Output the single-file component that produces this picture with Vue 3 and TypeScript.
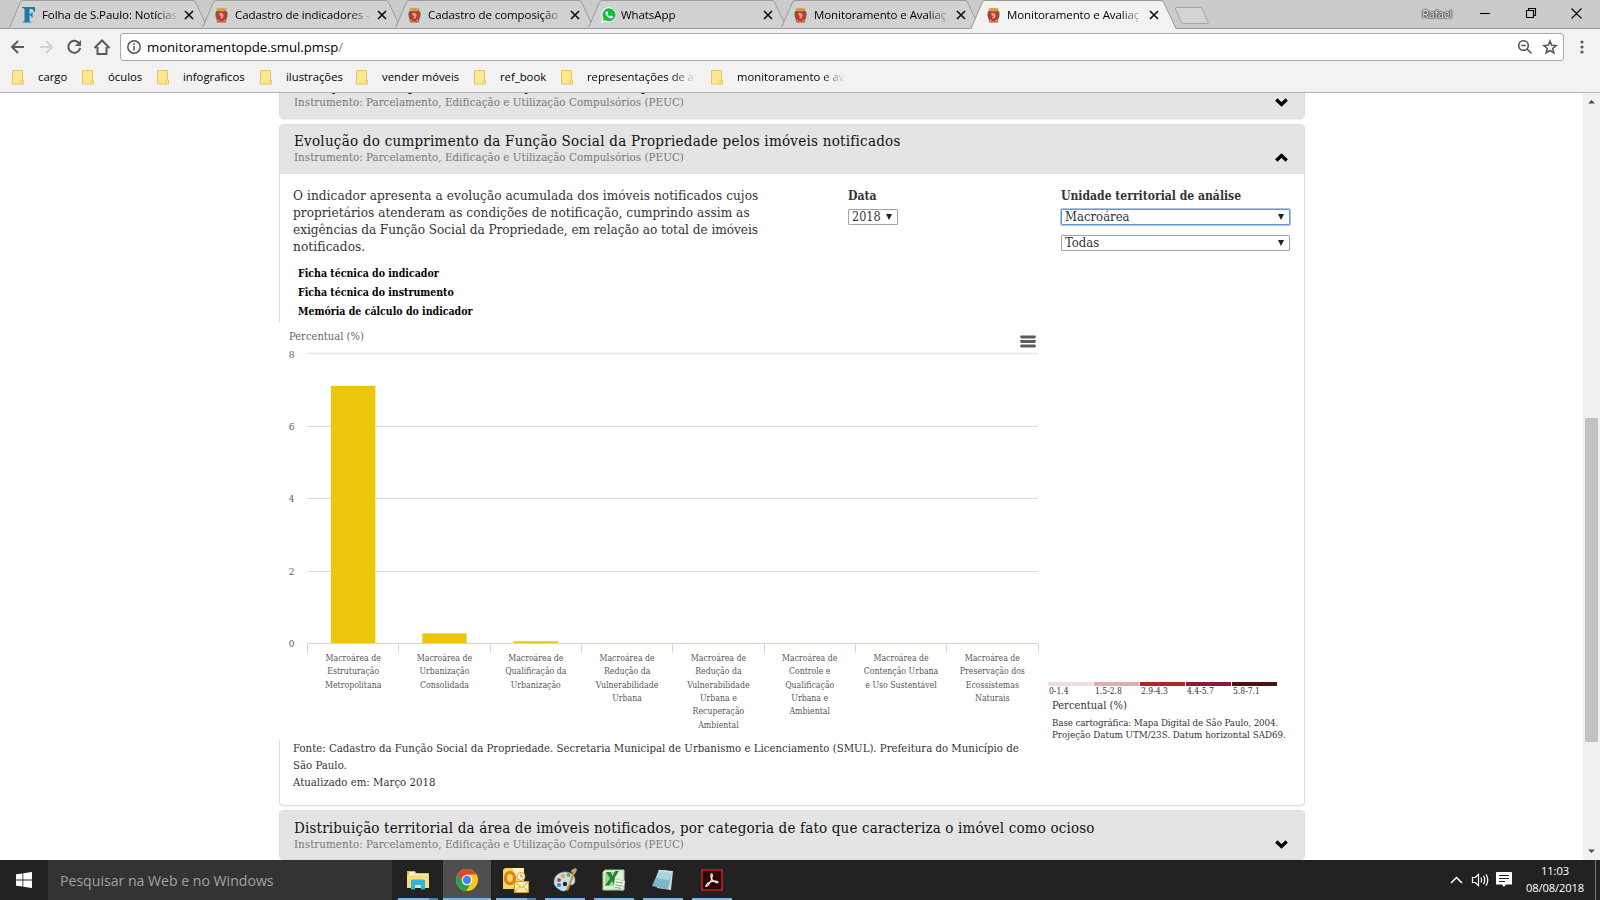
<script setup lang="ts">
interface Tab { title: string; icon: 'folha' | 'crest' | 'whatsapp'; active?: boolean }

const tabs: Tab[] = [
  { title: 'Folha de S.Paulo: Notícias', icon: 'folha' },
  { title: 'Cadastro de indicadores - ', icon: 'crest' },
  { title: 'Cadastro de composição', icon: 'crest' },
  { title: 'WhatsApp', icon: 'whatsapp' },
  { title: 'Monitoramento e Avaliaç', icon: 'crest' },
  { title: 'Monitoramento e Avaliaç', icon: 'crest', active: true },
]

const bookmarks: { label: string; cls: string }[] = [
  { label: 'cargo', cls: 'w70' },
  { label: 'óculos', cls: 'w75' },
  { label: 'infograficos', cls: 'w103' },
  { label: 'ilustrações', cls: 'w96' },
  { label: 'vender móveis', cls: 'w118' },
  { label: 'ref_book', cls: 'w87' },
  { label: 'representações de ar', cls: 'w150 clip' },
  { label: 'monitoramento e ava', cls: 'w150 clip' },
]

const instrument = 'Instrumento: Parcelamento, Edificação e Utilização Compulsórios (PEUC)'

const links = ['Ficha técnica do indicador', 'Ficha técnica do instrumento', 'Memória de cálculo do indicador']

const categories: { lines: string[]; value: number }[] = [
  { lines: ['Macroárea de', 'Estruturação', 'Metropolitana'], value: 7.12 },
  { lines: ['Macroárea de', 'Urbanização', 'Consolidada'], value: 0.28 },
  { lines: ['Macroárea de', 'Qualificação da', 'Urbanização'], value: 0.06 },
  { lines: ['Macroárea de', 'Redução da', 'Vulnerabilidade', 'Urbana'], value: 0 },
  { lines: ['Macroárea de', 'Redução da', 'Vulnerabilidade', 'Urbana e', 'Recuperação', 'Ambiental'], value: 0 },
  { lines: ['Macroárea de', 'Controle e', 'Qualificação', 'Urbana e', 'Ambiental'], value: 0 },
  { lines: ['Macroárea de', 'Contenção Urbana', 'e Uso Sustentável'], value: 0 },
  { lines: ['Macroárea de', 'Preservação dos', 'Ecossistemas', 'Naturais'], value: 0 },
]

/* Plot geometry, in the chart's own coordinates */
const left = 28.5
const right = 759
const zeroY = 321.5
const unit = 36.2
const step = (right - left) / categories.length
const ticks = [0, 2, 4, 6, 8]
const gridY = (v: number): number => Math.floor(zeroY - v * unit) + 0.5
const centerX = (i: number): number => left + step * (i + 0.5)

const legend = [
  { range: '0-1.4', cls: 'c1' },
  { range: '1.5-2.8', cls: 'c2' },
  { range: '2.9-4.3', cls: 'c3' },
  { range: '4.4-5.7', cls: 'c4' },
  { range: '5.8-7.1', cls: 'c5' },
]
</script>

<template>
  <div class="screen">
    <header class="tabstrip">
      <div v-for="(t, i) in tabs" :key="i" class="tab" :class="{ active: t.active }">
        <svg class="shape" width="206" height="29" viewBox="0 0 206 29">
          <path d="M0 29L11 3Q12 .5 14 .5H190Q192 .5 193 3L205 28.5V29Z" class="fill" />
          <path d="M0 28.5L11 3Q12 .5 14 .5H190Q192 .5 193 3L205 28.5" class="edge" />
        </svg>
        <span class="fav">
          <svg v-if="t.icon === 'folha'" width="14" height="18" viewBox="0 0 14 18">
            <path d="M0 1h13v5h-1.200c-.3-2-1-3-2.600-3H7.500v5.200c1.400 0 2-.6 2.200-2h.9v5.400h-.9c-.2-1.400-.8-2-2.200-2v4.600c0 1.200.5 1.500 1.900 1.600v.8H.8v-.8c1.300-.1 1.700-.4 1.700-1.600V4c0-1.300-.5-1.700-2.500-1.900z" fill="#1a7ba6" />
          </svg>
          <svg v-else-if="t.icon === 'crest'" width="13" height="16" viewBox="0 0 13 16">
            <path d="M1.500.8l1.700 1L5 .6l1.500 1L8 .6l1.800 1.200 1.700-1-.6 3.500H2.100z" fill="#c9a13c" />
            <path d="M1.200 4h2.300v9H2Q-.8 8 1.200 4zM11.800 4H9.500v9H11Q13.800 8 11.800 4z" fill="#5c6f45" />
            <path d="M2.300 4.200h8.400v6q0 3-4.200 4.300Q2.300 13 2.300 10.200z" fill="#cf2f2d" />
            <path d="M4.500 6h2.500l1.800 2-1.200 3.500H5.200L6 9 4.300 8z" fill="#e8a597" />
            <path d="M1.500 12.700q5 3 10 0l-.8 2.800H2.300z" fill="#b75a42" />
          </svg>
          <svg v-else width="16" height="16" viewBox="0 0 16 16">
            <path d="M8.200.3a7.500 7.500 0 1 1-3.800 14.200L.3 15.700l1.200-4A7.500 7.500 0 0 1 8.200.3z" fill="#f7fff8" />
            <path d="M8.200 1.300a6.500 6.500 0 1 1-3.600 12l-2.800.8.800-2.700A6.500 6.500 0 0 1 8.200 1.300z" fill="#12bd3f" />
            <path d="M5.300 4.300l1-.1.900 2-.7 1c.6 1.200 1.400 1.900 2.600 2.400l.9-1 2 .9c.2 1.300-.9 2-2 2-2.500-.2-5.300-3-5.500-5.200 0-.9.300-1.500.8-2z" fill="#fff" />
          </svg>
        </span>
        <span class="title">{{ t.title }}</span>
        <svg class="close" width="10" height="10" viewBox="0 0 10 10"><path d="M1 1l8 8M9 1L1 9" /></svg>
      </div>
      <svg class="newtab" width="36" height="18" viewBox="0 0 36 18">
        <path d="M2.500.5H26q1.500 0 2.200 1.300L34 15q.6 1.500-1 1.500H9.500q-1.500 0-2.200-1.500L1.500 2Q1 .5 2.500.5z" fill="#d4d4d4" stroke="#a5a5a5" />
      </svg>
      <div class="window">
        <span class="user">Rafael</span>
        <svg width="104" height="13" viewBox="0 0 104 13" fill="none" stroke="#000" stroke-width="1.100">
          <path d="M1 6.500h10" /><path d="M47.500 3.500h7v7h-7zM49.500 3.500v-2h7v7h-2M92.500 1.500l10 10M102.500 1.500l-10 10" />
        </svg>
      </div>
    </header>

    <div class="toolbar">
      <svg width="104" height="20" viewBox="0 0 104 20" fill="none" stroke-width="2">
        <g stroke="#5a5a5a">
          <path d="M14 10H2M8 4l-6 6 6 6" />
          <path d="M69.300 6.500A6 6 0 1 0 70.200 11" /><path d="M71 3v6h-6z" fill="#5a5a5a" stroke="none" />
          <path d="M84.500 11l7.500-7.500 7.500 7.500M87.500 10v7h9v-7" />
        </g>
        <path d="M30 10h12M36 4l6 6-6 6" stroke="#d2d2d2" />
      </svg>
      <div class="omnibox">
        <svg width="14" height="14" viewBox="0 0 14 14" fill="none" stroke="#555" stroke-width="1.500">
          <circle cx="7" cy="7" r="6.200" /><path d="M7 6v4.500M7 3.300v1.600" />
        </svg>
        <span class="url">monitoramentopde.smul.pmsp<i>/</i></span>
        <svg width="42" height="16" viewBox="0 0 42 16" fill="none" stroke="#555" stroke-width="1.600">
          <circle cx="6.500" cy="6.500" r="4.800" /><path d="M10 10l4.500 4.500M4.300 6.500h4.400" />
          <path d="M33 2l1.700 4.200 4.500.3-3.500 2.900 1.200 4.500L33 11.500l-3.900 2.400 1.200-4.500-3.500-2.900 4.500-.3z" stroke-width="1.500" />
        </svg>
      </div>
      <svg class="menu" width="4" height="14" viewBox="0 0 4 14" fill="#5a5a5a"><circle cx="2" cy="2" r="1.600" /><circle cx="2" cy="7" r="1.600" /><circle cx="2" cy="12" r="1.600" /></svg>
    </div>

    <nav class="bookmarks">
      <div v-for="b in bookmarks" :key="b.label" class="bm" :class="b.cls">
        <svg width="12" height="15" viewBox="0 0 12 15"><path d="M.5.500h10v9.500h1v4H.5z" fill="#ffe793" stroke="#e6c460" /><path d="M9 14v-3.500l1.500-.5" fill="none" stroke="#e6c460" /></svg>
        <span>{{ b.label }}</span>
      </div>
    </nav>

    <div class="viewport">
      <main class="page">
        <section class="panel">
          <div class="head">
            <div><h2>Situação do cumprimento da Função Social da Propriedade</h2><p>{{ instrument }}</p></div>
            <svg class="chev" width="13" height="9" viewBox="0 0 13 9"><path d="M1.300 1.500l5.200 5 5.200-5" /></svg>
          </div>
        </section>

        <section class="panel open">
          <div class="head">
            <div><h2 class="t1">Evolução do cumprimento da Função Social da Propriedade pelos imóveis notificados</h2><p>{{ instrument }}</p></div>
            <svg class="chev" width="13" height="9" viewBox="0 0 13 9"><path d="M1.300 7.500l5.200-5 5.200 5" /></svg>
          </div>
          <div class="info">
            <div>
              <p class="desc">O indicador apresenta a evolução acumulada dos imóveis notificados cujos<br><span class="d2">proprietários atenderam as condições de notificação, cumprindo assim as</span><br><span class="d3">exigências da Função Social da Propriedade, em relação ao total de imóveis</span><br>notificados.</p>
              <ul><li v-for="l in links" :key="l">{{ l }}</li></ul>
            </div>
            <div class="field date"><label>Data</label><div class="select">2018<b></b></div></div>
            <div class="field"><label>Unidade territorial de análise</label><div class="select focus">Macroárea<b></b></div><div class="select">Todas<b></b></div></div>
          </div>

          <div class="row">
            <svg class="chart" width="764" height="418" viewBox="0 0 764 418">
              <text x="10" y="18" class="axis">Percentual (%)</text>
              <g v-for="t in ticks" :key="t">
                <path v-if="t > 0" :d="`M${left} ${gridY(t)}H${right}`" :class="['grid', { top: t === 8 }]" />
                <text x="12.500" :y="gridY(t) + 3" class="tick" :class="{ drop: t === 8 }">{{ t }}</text>
              </g>
              <rect v-for="(c, i) in categories" :key="'b' + i" :x="centerX(i) - 22.200" :y="zeroY - c.value * unit" width="44.400" :height="c.value * unit" fill="#ecc60b" />
              <path :d="`M${left} ${zeroY}H${right}`" class="base" />
              <path v-for="i in 9" :key="'t' + i" :d="`M${Math.floor(left + step * (i - 1)) + .5} ${zeroY}v9`" class="base" />
              <g v-for="(c, i) in categories" :key="'c' + i">
                <text v-for="(l, j) in c.lines" :key="j" :x="centerX(i)" :y="338.800 + j * 13.400" class="cat">{{ l }}</text>
              </g>
              <path d="M742.500 15h13M742.500 19.500h13M742.500 24h13" stroke="#5c5c5c" stroke-width="2.800" stroke-linecap="round" />
            </svg>
            <aside class="map">
              <div class="legend"><div v-for="l in legend" :key="l.range"><i :class="l.cls"></i><span>{{ l.range }}</span></div></div>
              <p class="unit">Percentual (%)</p>
              <p class="note"><span>Base cartográfica: Mapa Digital de São Paulo, 2004.</span><br>Projeção Datum UTM/23S. Datum horizontal SAD69.</p>
            </aside>
          </div>

          <p class="source">Fonte: Cadastro da Função Social da Propriedade. Secretaria Municipal de Urbanismo e Licenciamento (SMUL). Prefeitura do Município de<br>São Paulo.<br>Atualizado em: Março 2018</p>
        </section>

        <section class="panel last">
          <div class="head">
            <div><h2 class="t2">Distribuição territorial da área de imóveis notificados, por categoria de fato que caracteriza o imóvel como ocioso</h2><p>{{ instrument }}</p></div>
            <svg class="chev" width="13" height="9" viewBox="0 0 13 9"><path d="M1.300 1.500l5.200 5 5.200-5" /></svg>
          </div>
        </section>
      </main>
      <div class="scroll">
        <svg width="17" height="17" viewBox="0 0 17 17"><path d="M5 10.500h7L8.500 7z" fill="#505050" /></svg>
        <div class="thumb"></div>
        <svg width="17" height="17" viewBox="0 0 17 17"><path d="M5 6.500h7L8.500 10z" fill="#505050" /></svg>
      </div>
    </div>

    <footer class="taskbar">
      <div class="start"><svg width="16" height="16" viewBox="0 0 16 16" fill="#fff"><path d="M0 2.300l6.500-.9v6.200H0zM7.300 1.300L16 0v7.600H7.300zM0 8.400h6.500v6.200L0 13.700zM7.300 8.400H16V16l-8.700-1.300z" /></svg></div>
      <div class="search">Pesquisar na Web e no Windows</div>
      <div class="apps">
        <div class="app double">
          <svg width="24" height="24" viewBox="0 0 24 24"><path d="M1 3h8l1.500 2H23v15H1z" fill="#e9b949" /><path d="M3 4h5l1 2h13v3H3z" fill="#fff3c2" /><path d="M1 7h22v13H1z" fill="#fbdc7a" /><path d="M5 13q0-1.500 1.500-1.500h11Q19 11.500 19 13v8.500h-4V17H9v4.500H5z" fill="#2db4dc" /></svg>
        </div>
        <div class="app current">
          <svg width="24" height="24" viewBox="0 0 24 24"><circle cx="12" cy="12" r="11" fill="#fbc916" /><path d="M12 12L2.500 6.500A11 11 0 0 0 11 23l5.500-9z" fill="#2b9f49" /><path d="M2.500 6.500A11 11 0 0 1 21.500 6.500H12L8 14z" fill="#df4432" /><circle cx="12" cy="12" r="5.300" fill="#fff" /><circle cx="12" cy="12" r="4.200" fill="#4b83e8" /></svg>
        </div>
        <div class="app double">
          <svg width="28" height="28" viewBox="0 0 28 28"><path d="M3 2h19v21H1V4z" fill="#f6d465" /><path d="M11 2h11v9L11 14z" fill="#fff2bd" /><ellipse cx="8" cy="12" rx="4.600" ry="5.600" fill="none" stroke="#df8414" stroke-width="3.200" /><circle cx="19" cy="10.500" r="4" fill="#fff7d9" stroke="#e3a33c" /><path d="M19 8v3h2" fill="none" stroke="#c67a21" /><path d="M12.500 15.500h14v11h-14z" fill="#fff0ae" stroke="#cf9d36" /><path d="M12.500 15.500l7 6.500 7-6.500M12.500 26.500l5-6M26.500 26.500l-5-6" fill="none" stroke="#cf9d36" /></svg>
        </div>
        <div class="app">
          <svg width="24" height="26" viewBox="0 0 24 26"><path d="M1 15C1 9 6 5 12 5s10 3 10 8-3 5-5 5-2 2-3 4-4 3-7 1-6-4-6-8z" fill="#c5dfef" stroke="#6e9dbd" stroke-width=".6" /><circle cx="6" cy="13" r="2" fill="#ce3a3a" /><circle cx="10" cy="9" r="2" fill="#e8a12a" /><circle cx="15.500" cy="8" r="2" fill="#67ad3b" /><circle cx="6" cy="18" r="2" fill="#3e7fd0" /><circle cx="12" cy="17" r="2.200" fill="#242424" /><path d="M20 5l2 1-7 18-1.500-.5z" fill="#db8730" /><path d="M18 5q0-3 5-4l1 2-2 4z" fill="#c59f76" /></svg>
        </div>
        <div class="app">
          <svg width="24" height="24" viewBox="0 0 24 24"><path d="M3 2h19v20H1V4z" fill="#dff0d8" stroke="#a7cf9c" /><path d="M3 5l10-1.500v14L3 18z" fill="#a6d68a" /><path d="M4 4h4.500l2 4 3-5H17l-4.500 7 4 7.500h-4.300L10 13l-3 4.500H3L8 10.500z" fill="#218340" /><path d="M13 11l10 2-2 9-10-1z" fill="#fafdf8" stroke="#9ec994" stroke-width=".7" /><path d="M14 14l7 1M13.500 17l7 1M13 19.500l6.500.8" stroke="#5da764" /></svg>
        </div>
        <div class="app">
          <svg width="24" height="24" viewBox="0 0 24 24"><path d="M8 2l14 1-2 19-14-2z" fill="#d9d6cd" /><path d="M8 2l13 1.500L17 21.500 1 18z" fill="#79b7c9" /><path d="M8 2l13 1.500-3 9L5 10z" fill="#b7dce4" opacity=".75" /><path d="M8 2.500l13 1.500" stroke="#e9f3f3" stroke-width="1.500" stroke-dasharray="1.500 1" /></svg>
        </div>
        <div class="app">
          <svg width="22" height="22" viewBox="0 0 22 22"><path d="M1 1h20v20H1z" fill="#2b0605" stroke="#c0211a" stroke-width="1.600" /><path d="M5 16.500c1.500-2.500 5-4.500 10-4.300 2.500.2 2.500 1.600.8 1.600C12.500 13.500 9.500 9 9.800 6c.1-1.600 1.600-1.600 1.600 0-.1 3.500-2.500 9-5 11-1 .7-1.900.3-1.400-.5z" fill="none" stroke="#f4eded" stroke-width="1.200" /></svg>
        </div>
      </div>
      <div class="tray">
        <svg width="58" height="18" viewBox="0 0 58 18" fill="none" stroke="#fff" stroke-width="1.200">
          <path d="M1 12l5.500-5.500L12 12" stroke-width="1.500" />
          <path d="M22.500 6.500h2.800L28.500 3.500v11l-3.200-3h-2.800zM31 6.500q1.500 2.500 0 5M33.500 4.800q2.500 4.200 0 8.400M36 3.300q3.500 5.700 0 11.400" />
          <path d="M46 2h16v12.500H56L54 17l-2-2.500h-6z" transform="translate(0 -1)" fill="#fff" stroke="none" />
          <path d="M49 4.500h10M49 7.500h10M49 10.500h6" stroke="#222" />
        </svg>
        <div class="clock"><span>11:03</span><span>08/08/2018</span></div>
        <div class="peek"></div>
      </div>
    </footer>
  </div>
</template>

<style>
html, body { margin: 0; overflow: hidden; background: #fff; }
</style>

<style scoped>
.screen { width: 1600px; height: 900px; display: flex; flex-direction: column; overflow: hidden; background: #fff; color: #000; font-family: "Open Sans", sans-serif; }
.screen * { box-sizing: border-box; }
svg { flex: none; display: block; }
p, h2, ul { margin: 0; padding: 0; font-weight: normal; list-style: none; }

.tabstrip { height: 29px; flex: none; background: #cbcbcb; box-shadow: inset 0 -1px #999; display: flex; padding-left: 6px; }
.tab { position: relative; width: 193px; height: 29px; flex: none; display: flex; align-items: center; padding-left: 16px; }
.shape { position: absolute; left: 0; top: 0; }
.fill { fill: #d1d1d1; }
.edge { fill: none; stroke: #999; }
.tab:not(.active) .shape { border-bottom: 1px solid #999; }
.active { z-index: 1; }
.active .fill { fill: #f2f2f2; }
.fav, .title, .close { position: relative; }
.fav { width: 20px; }
.title { width: 136px; white-space: nowrap; overflow: hidden; font-size: 11.500px; letter-spacing: -.08px; line-height: 18px; -webkit-mask: linear-gradient(90deg, #000 114px, transparent 137px); mask: linear-gradient(90deg, #000 114px, transparent 137px); }
.close { margin-left: 6px; fill: none; stroke: #111; stroke-width: 1.700; }
.newtab { margin: 7px 0 0 10px; }
.window { margin-left: auto; padding-right: 17px; display: flex; align-items: flex-start; }
.user { font-size: 10.500px; line-height: 14px; color: #fff; margin: 7px 27px 0 0; letter-spacing: -.1px; text-shadow: 0 0 1px #222, 0 0 1px #222, 0 0 2px #333, 0 0 2px #444; }
.window svg { margin-top: 7px; }

.toolbar { height: 33px; flex: none; background: #f2f2f2; display: flex; align-items: center; padding: 3px 0 0 10px; }
.omnibox { margin-left: 6px; width: 1444px; height: 28px; background: #fff; border: 1px solid #a9a9a9; border-radius: 3px; display: flex; align-items: center; padding-left: 6px; }
.url { flex: 1; margin-left: 6px; font-size: 13.200px; line-height: 18px; letter-spacing: -.04px; }
.url i { font-style: normal; color: #888; }
.omnibox > svg:last-child { margin-right: 4px; }
.menu { margin-left: 16px; }

.bookmarks { height: 31px; flex: none; background: #f2f2f2; border-bottom: 1px solid #b3b3b3; display: flex; padding-left: 12px; }
.bm { display: flex; align-items: center; height: 31px; flex: none; font-size: 11.300px; line-height: 16px; white-space: nowrap; }
.bm span { margin: -1px 0 0 14px; }
.clip span { width: 109px; overflow: hidden; -webkit-mask: linear-gradient(90deg, #000 84px, transparent 109px); mask: linear-gradient(90deg, #000 84px, transparent 109px); }
.w70 { width: 70px; } .w75 { width: 75px; } .w103 { width: 103px; } .w96 { width: 96px; } .w118 { width: 118px; } .w87 { width: 87px; } .w150 { width: 150px; }

.viewport { height: 767px; flex: none; overflow: hidden; display: flex; justify-content: space-between; background: #fff; }
.page { margin: -24px 0 0 279px; width: 1026px; display: flex; flex-direction: column; gap: 5px; font-family: "DejaVu Serif Condensed", "DejaVu Serif", serif; }
.panel { flex: none; border: 1px solid #ddd; border-radius: 4px; box-shadow: 0 1px 1px rgba(0, 0, 0, .05); }
.open { height: 682px; }
.last { margin-top: -1px; }
.head { height: 48px; background: #e4e4e4; display: flex; justify-content: space-between; align-items: flex-start; padding: 7px 16px 0 14px; border-radius: 3px; }
.open .head { height: 49px; border-bottom: 1px solid #ddd; border-radius: 3px 3px 0 0; }
.last .head { padding-top: 8px; }
h2 { font-size: 15px; line-height: 18px; color: #111; white-space: nowrap; }
.t1 { letter-spacing: .25px; }
.t2 { letter-spacing: .17px; }
.head p { font-size: 11.500px; line-height: 14px; letter-spacing: .03px; color: #777; }
.chev { margin-top: 21px; fill: none; stroke: #000; stroke-width: 3.400; }

.info { height: 148px; display: grid; grid-template-columns: 555px 213px auto; padding: 13px 14px 0 13px; color: #333; }
.desc { font-size: 13.500px; line-height: 17px; letter-spacing: .06px; white-space: nowrap; }
.d2 { letter-spacing: .03px; }
.d3 { letter-spacing: -.05px; }
ul { margin: 9px 0 0 5px; }
li { font-size: 10.500px; font-weight: bold; line-height: 19px; color: #000; }
.field label { display: block; font-size: 12.050px; font-weight: bold; line-height: 17px; padding-top: 1px; margin-bottom: 4px; }
.select { height: 16px; border: 1px solid #a3a3a3; border-radius: 1px; display: flex; justify-content: space-between; align-items: center; padding: 0 5px 0 3px; font-size: 13px; line-height: 14px; margin-bottom: 10px; }
.select b { width: 0; height: 0; border: 3px solid transparent; border-top: 6px solid #222; border-bottom: 0; }
.date .select { width: 50px; font-size: 12.500px; }
.focus { border-color: #6593dd; box-shadow: 0 0 0 1px #a9c4ef; }

.row { display: flex; height: 418px; }
.chart { margin-left: -1px; background: #fff; font-family: inherit; }
.axis { font-size: 11.100px; fill: #666; }
.tick { font-size: 10px; fill: #606060; text-anchor: middle; }
.drop { transform: translateY(1px); }
.grid { stroke: #dcdcdc; }
.grid.top { stroke: #e6e6e6; stroke-width: 1.600; }
.base { stroke: #ccd6eb; }
.cat { font-size: 8.700px; fill: #555; text-anchor: middle; }
.map { padding: 360px 0 0 5px; color: #333; }
.legend { display: flex; gap: 1px; }
.legend div { width: 45px; }
.legend i { display: block; width: 44.600px; height: 4px; }
.legend span { display: block; font-size: 8.500px; line-height: 10px; padding-left: 1px; }
.c1 { background: #efdbe0; } .c2 { background: #dcaeb0; } .c3 { background: #b32428; } .c4 { background: #8f1838; } .c5 { background: #4d1019; }
.unit { font-size: 11.100px; line-height: 16px; margin: 2px 0 0 4px; }
.note { font-size: 9.700px; line-height: 11.500px; margin: 3px 0 0 4px; white-space: nowrap; }
.note span { letter-spacing: -.1px; }
.source { font-size: 11.300px; line-height: 17px; padding-left: 13px; letter-spacing: .01px; color: #333; white-space: nowrap; }

.scroll { width: 17px; background: #f1f1f1; display: flex; flex-direction: column; }
.thumb { margin: 308px 2px auto; height: 324px; background: #c1c1c1; }

.taskbar { height: 40px; flex: none; background: #222; display: flex; color: #fff; }
.start { width: 48px; display: grid; place-items: center; }
.search { width: 344px; background: #333; color: #a2a2a2; font-size: 14.100px; line-height: 41px; padding-left: 12px; }
.apps { display: flex; }
.app { width: 49px; height: 40px; display: grid; place-items: center; background: linear-gradient(#7ab4e8, #7ab4e8) center bottom / 40px 2px no-repeat; }
.apps .app:first-child { width: 51px; }
.apps .current { width: 48px; background-color: #4f4f4f; background-size: 100% 2px; }
.double { background: linear-gradient(90deg, #7ab4e8 31px, #4c7fae 31px) center bottom / 40px 2px no-repeat; }
.tray { margin-left: auto; display: flex; align-items: center; }
.tray svg { overflow: visible; }
.clock { width: 58px; margin: -2px 11px 0 18px; display: flex; flex-direction: column; align-items: center; font-size: 11.200px; line-height: 17px; letter-spacing: -.15px; white-space: nowrap; }
.peek { width: 5px; height: 40px; border-left: 1px solid #777; }
</style>
